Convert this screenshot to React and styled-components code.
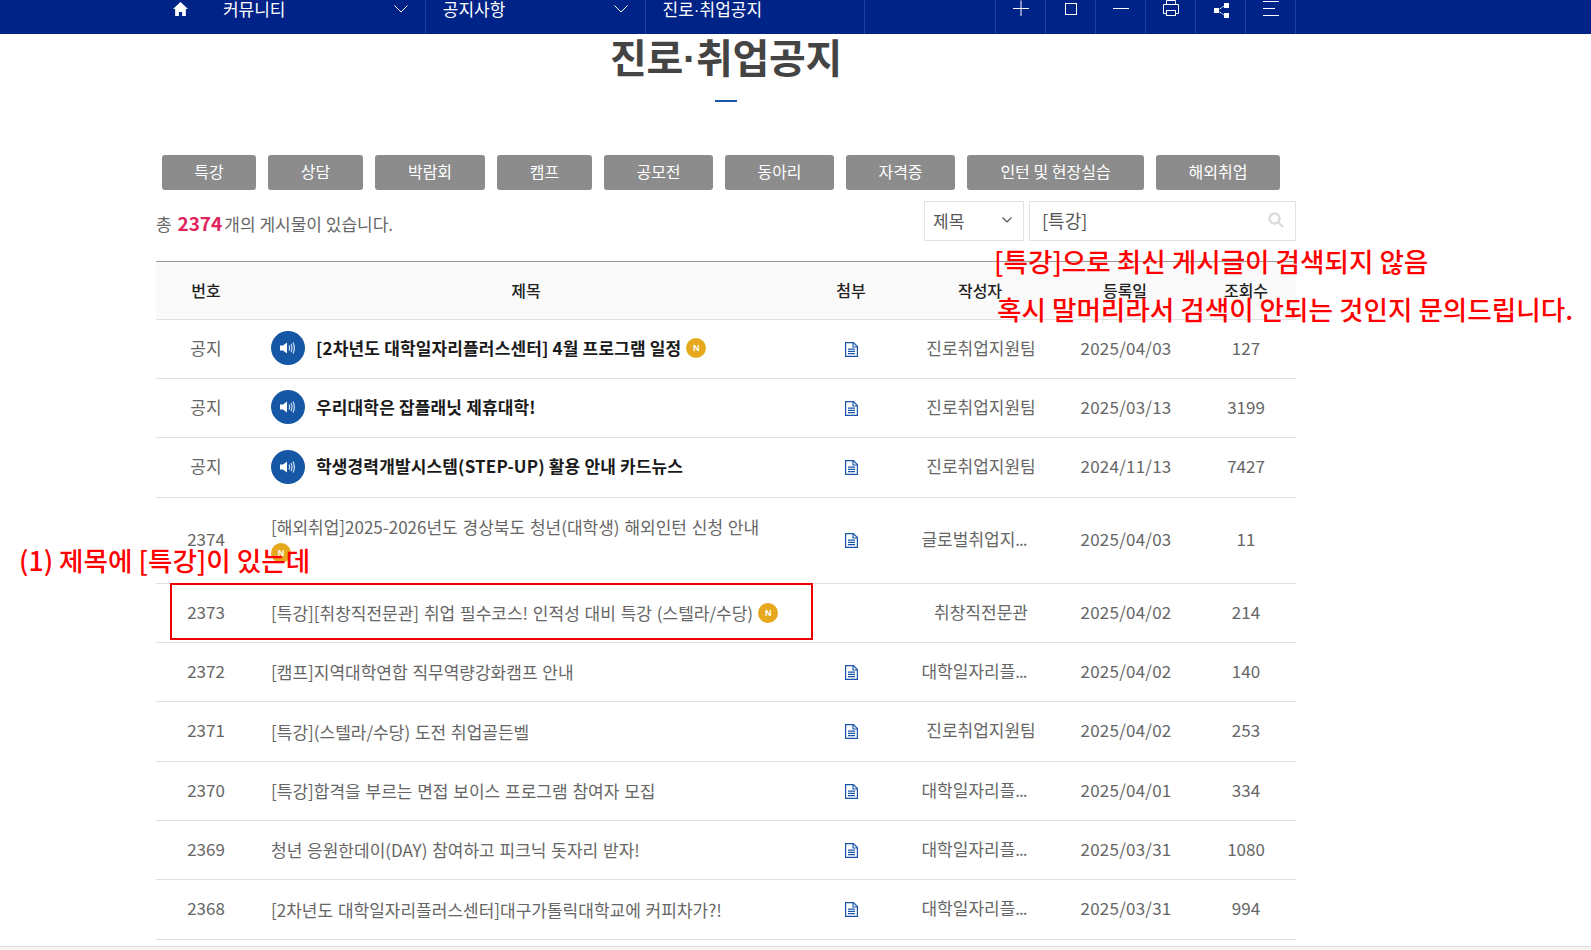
import React from "react";
import styled, { createGlobalStyle } from "styled-components";

const Global = createGlobalStyle`
  html, body { margin: 0; padding: 0; background: #fff; }
  body { font-family: "Noto Sans CJK KR", "Noto Sans", sans-serif; overflow: hidden; height: 950px; }
`;
const Page = styled.div`position: relative; width: 1591px; height: 950px; overflow: hidden; background: #fff;`;
const Nav = styled.nav`height: 34px; background: #002387; overflow: hidden;`;
const NavInner = styled.div`width: 1140px; margin: 0 0 0 156px; height: 34px; display: flex; align-items: flex-start;`;
const HomeCell = styled.div`width: 50px; height: 34px; display: flex; justify-content: center; padding-top: 2px; box-sizing: border-box;`;
const Crumb = styled.div`
  width: ${p => p.$w}px; height: 34px; box-sizing: border-box; padding: 0 17px 0 ${p => p.$pl}px;
  display: flex; justify-content: space-between; color: #fff; font-size: 17px; line-height: 18px;
  border-right: 1px solid #22409a;
`;
const Tool = styled.div`width: 50px; height: 34px; box-sizing: border-box; border-right: 1px solid #22409a; display: flex; justify-content: center; align-items: flex-start;`;
const Spacer = styled.div`width: 131px; height: 34px; border-right: 1px solid #22409a; box-sizing: border-box;`;
const Heading = styled.h1`margin: 0 0 0 156px; height: 48px; text-align: center; width: 1140px; font-size: 40px; line-height: 44px; font-weight: 700; color: #444; letter-spacing: -0.3px;`;
const NarrowDot = styled.span`font-family: "Liberation Sans", sans-serif;`;
const Dash = styled.div`width: 22px; height: 2px; background: #1a56a8; margin: 18px 0 0 715px;`;
const Main = styled.main`width: 1140px; margin: 53px 0 0 156px;`;
const Tabs = styled.div`display: flex; gap: 12px; padding-left: 6px;`;
const Tab = styled.button`
  width: ${p => p.$w}px; height: 35px; padding: 0 0 2px; border: 0; border-radius: 3px; background: #8c8c8c; color: #fff;
  font: 400 16px/33px "Noto Sans CJK KR", sans-serif;
`;
const Bar = styled.div`display: flex; align-items: center; justify-content: space-between; height: 40px; margin-top: 11px;`;
const Total = styled.div`font-size: 17px; color: #666; padding-top: 3px;`;
const Count = styled.b`color: #e0245e; font-size: 19px; font-weight: 700; margin: 0 2px;`;
const Search = styled.div`display: flex; gap: 5px;`;
const Select = styled.div`
  width: 100px; height: 40px; box-sizing: border-box; border: 1px solid #e3e3e3; padding: 0 11px 2px 8px;
  display: flex; align-items: center; justify-content: space-between; font-size: 17px; color: #555;
`;
const Input = styled.div`
  width: 267px; height: 40px; box-sizing: border-box; border: 1px solid #e3e3e3; padding: 0 11px 2px 12px;
  display: flex; align-items: center; justify-content: space-between; font-size: 18px; color: #555;
`;
const Table = styled.table`width: 1140px; margin-top: 20px; border-collapse: collapse; table-layout: fixed; border-top: 1px solid #999;`;
const Th = styled.th`height: 57px; box-sizing: content-box; padding: 0; background: #fafafa; border-bottom: 1px solid #e0e0e0; font-size: 16px; line-height: 22px; font-weight: 500; color: #222; text-align: center; vertical-align: middle;`;
const ThLabel = styled.span`display: block; margin-top: -2px;`;
const Tr = styled.tr`border-bottom: 1px solid #e0e0e0; height: ${p => p.$h}px;`;
const Td = styled.td`padding: 0 0 4px; font-size: 17px; color: #666; text-align: center;`;
const DateTd = styled(Td)`padding-left: 2px; letter-spacing: 0.2px;`;
const TitleCell = styled.td`padding: 15px 15px 16px; font-size: 17px; line-height: 27px; color: #666; text-align: left; word-spacing: 1px;`;
const NoticeTitle = styled.div`display: flex; align-items: center; gap: 11px; font-weight: 700; color: #1a1a1a; letter-spacing: 0.15px; word-spacing: 0; margin: -6px 0 -3px;`;
const Speaker = styled.span`flex: none; width: 34px; height: 34px; margin-top: 2px; border-radius: 50%; background: #1557a5; display: flex; align-items: center; justify-content: center;`;
const Badge = styled.span`
  display: inline-block; width: 20px; height: 20px; border-radius: 50%; background: #e6a91e; color: #fff; margin-left: 5px;
  font: 700 9px/20px "Liberation Sans", sans-serif; text-align: center; vertical-align: 4px; letter-spacing: 0;
`;
const WrappedBadge = styled(Badge)`margin: 3px 0 4px; display: block;`;
const Author = styled.span`display: inline-block; padding: ${p => (p.$cut ? "0 12px 0 0" : "0 0 0 2px")};`;
const Dots = styled.span`letter-spacing: -1px;`;
const Note = styled.div`
  position: absolute; left: ${p => p.$x}px; top: ${p => p.$y}px; white-space: nowrap; color: #ff0000; font-size: 26.6px; line-height: 36px; font-weight: 500;
`;
const RedBox = styled.div`position: absolute; left: 170px; top: 583px; width: 643px; height: 57px; box-sizing: border-box; border: 2px solid #ee0000;`;
const Strip = styled.div`position: absolute; left: 0; right: 0; top: 946px; height: 4px; border-top: 1px solid #dcdcdc; background: #f6f6f6; box-sizing: border-box;`;

const Home = () => (
  <svg width="15" height="14" viewBox="0 0 14 14" fill="#fff" preserveAspectRatio="none"><path d="M7 0 L0 7 H2 V14 H5.5 V10 H8.5 V14 H12 V7 H14Z" /></svg>
);
const Chev = () => (
  <svg width="14" height="8" viewBox="0 0 14 8" fill="none" stroke="#fff" strokeWidth="1" style={{ marginTop: 5 }}><path d="M.5.5 7 7 13.5.5" /></svg>
);
const Plus = () => <svg width="16" height="16" viewBox="0 0 16 16" stroke="#fff" strokeWidth="1"><path d="M0 8.5H16M8 0.5V16" /></svg>;
const Square = () => <svg width="12" height="13" viewBox="0 0 12 13" fill="none" stroke="#fff" strokeWidth="1" style={{ marginTop: 3 }}><rect x=".5" y=".5" width="11" height="11" /></svg>;
const Minus = () => <svg width="16" height="16" viewBox="0 0 16 16" stroke="#fff" strokeWidth="1"><path d="M0 8.5H16" /></svg>;
const Printer = () => (
  <svg width="16" height="17" viewBox="0 0 16 17" fill="none" stroke="#fff" strokeWidth="1"><path d="M3.5 4V.5H12.5V4M3.5 13.5H.5V4.5H15.5V13.5H12.5" /><rect x="3.5" y="10.5" width="9" height="5" /></svg>
);
const Share = () => (
  <svg width="16" height="16" viewBox="0 0 16 16" fill="#fff" style={{ marginTop: 3 }}><rect x="1" y="5" width="5" height="5" /><rect x="11" y="0" width="5" height="5" /><rect x="11" y="10" width="5" height="5" /><path d="M5 7 12 2.5M5 8 12 12.5" fill="none" stroke="#fff" strokeWidth="1" strokeDasharray="1.5 .6" /></svg>
);
const Menu = () => <svg width="17" height="16" viewBox="0 0 17 16" stroke="#fff" strokeWidth="1" style={{ marginLeft: 2 }}><path d="M0 1.5H16M0 8.5H12M0 15.5H16" /></svg>;
const SpeakerIcon = () => (
  <svg width="16" height="14" viewBox="0 0 16 14" fill="#fff"><path d="M0 4.5H3L7 1.5V12.5L3 9.5H0Z" /><path d="M9 4.5Q10.2 7 9 9.5M11 3Q13 7 11 11M13 1.5Q15.8 7 13 12.5" fill="none" stroke="#cfe0f4" strokeWidth="1.2" /></svg>
);
const FileIcon = () => (
  <svg width="13" height="15" viewBox="0 0 13 15" fill="none" stroke="#1a56a8" strokeWidth="1.2" style={{ verticalAlign: "-2px" }}><path d="M.6.6H8.4L12.4 4.6V14.4H.6Z" /><path d="M8 .6V5H12.4" /><path d="M3 7.2H10M3 9.4H10M3 11.6H10" /></svg>
);
const SearchIcon = () => (
  <svg width="16" height="16" viewBox="0 0 16 16" fill="none" stroke="#dcdcdc" strokeWidth="2.4"><circle cx="6.5" cy="6.5" r="5" /><path d="M10.5 10.5 15 15" /></svg>
);
const SelectChev = () => <svg width="10" height="6" viewBox="0 0 10 6" fill="none" stroke="#555" strokeWidth="1.2"><path d="M.5.5 5 5 9.5.5" /></svg>;

const tabs = [["특강", 94], ["상담", 95], ["박람회", 110], ["캠프", 95], ["공모전", 109], ["동아리", 109], ["자격증", 109], ["인턴 및 현장실습", 177], ["해외취업", 124]];
const heads = ["번호", "제목", "첨부", "작성자", "등록일", "조회수"];
const notices = [
  ["[2차년도 대학일자리플러스센터] 4월 프로그램 일정", true, "2025/04/03", "127", 59],
  ["우리대학은 잡플래닛 제휴대학!", false, "2025/03/13", "3199", 59],
  ["학생경력개발시스템(STEP-UP) 활용 안내 카드뉴스", false, "2024/11/13", "7427", 60],
];
const rows = [
  ["2374", "[해외취업]2025-2026년도 경상북도 청년(대학생) 해외인턴 신청 안내", true, true, "글로벌취업지", "2025/04/03", "11", true, 86],
  ["2373", "[특강][취창직전문관] 취업 필수코스! 인적성 대비 특강 (스텔라/수당)", true, false, "취창직전문관", "2025/04/02", "214", false, 59],
  ["2372", "[캠프]지역대학연합 직무역량강화캠프 안내", false, true, "대학일자리플", "2025/04/02", "140", true, 59],
  ["2371", "[특강](스텔라/수당) 도전 취업골든벨", false, true, "진로취업지원팀", "2025/04/02", "253", false, 60],
  ["2370", "[특강]합격을 부르는 면접 보이스 프로그램 참여자 모집", false, true, "대학일자리플", "2025/04/01", "334", true, 59],
  ["2369", "청년 응원한데이(DAY) 참여하고 피크닉 돗자리 받자!", false, true, "대학일자리플", "2025/03/31", "1080", true, 59],
  ["2368", "[2차년도 대학일자리플러스센터]대구가톨릭대학교에 커피차가?!", false, true, "대학일자리플", "2025/03/31", "994", true, 60],
];

export default function App() {
  return (
    <Page>
      <Global />
      <Nav>
        <NavInner>
          <HomeCell><Home /></HomeCell>
          <Crumb $w={220} $pl={17}>커뮤니티<Chev /></Crumb>
          <Crumb $w={220} $pl={17}>공지사항<Chev /></Crumb>
          <Crumb $w={220} $pl={17}><span>진로<NarrowDot>·</NarrowDot>취업공지</span></Crumb>
          <Spacer />
          <Tool><Plus /></Tool>
          <Tool><Square /></Tool>
          <Tool><Minus /></Tool>
          <Tool><Printer /></Tool>
          <Tool><Share /></Tool>
          <Tool><Menu /></Tool>
        </NavInner>
      </Nav>
      <Heading>진로<NarrowDot>·</NarrowDot>취업공지</Heading>
      <Dash />
      <Main>
        <Tabs>{tabs.map(([t, w]) => <Tab key={t} $w={w}>{t}</Tab>)}</Tabs>
        <Bar>
          <Total>총 <Count>2374</Count>개의 게시물이 있습니다.</Total>
          <Search>
            <Select>제목<SelectChev /></Select>
            <Input>[특강]<SearchIcon /></Input>
          </Search>
        </Bar>
        <Table>
          <colgroup>
            <col style={{ width: 100 }} /><col style={{ width: 540 }} /><col style={{ width: 110 }} /><col style={{ width: 148 }} /><col style={{ width: 142 }} /><col style={{ width: 100 }} />
          </colgroup>
          <thead>
            <tr>{heads.map(h => <Th key={h}><ThLabel>{h}</ThLabel></Th>)}</tr>
          </thead>
          <tbody>
            {notices.map(([t, n, d, v, h]) => (
              <Tr key={t} $h={h}>
                <Td>공지</Td>
                <TitleCell><NoticeTitle><Speaker><SpeakerIcon /></Speaker><span>{t}{n && <Badge>N</Badge>}</span></NoticeTitle></TitleCell>
                <Td><FileIcon /></Td>
                <Td><Author>진로취업지원팀</Author></Td>
                <DateTd>{d}</DateTd>
                <Td>{v}</Td>
              </Tr>
            ))}
            {rows.map(([no, t, n, f, a, d, v, cut, h]) => (
              <Tr key={no} $h={h}>
                <Td>{no}</Td>
                <TitleCell>{t}{n && (no === "2374" ? <WrappedBadge>N</WrappedBadge> : <Badge>N</Badge>)}</TitleCell>
                <Td>{f && <FileIcon />}</Td>
                <Td><Author $cut={cut}>{a}{cut && <Dots>...</Dots>}</Author></Td>
                <DateTd>{d}</DateTd>
                <Td>{v}</Td>
              </Tr>
            ))}
          </tbody>
        </Table>
      </Main>
      <Note $x={994} $y={243}>[특강]으로 최신 게시글이 검색되지 않음</Note>
      <Note $x={997} $y={291}>혹시 말머리라서 검색이 안되는 것인지 문의드립니다.</Note>
      <Note $x={19} $y={542}>(1) 제목에 [특강]이 있는데</Note>
      <RedBox />
      <Strip />
    </Page>
  );
}
